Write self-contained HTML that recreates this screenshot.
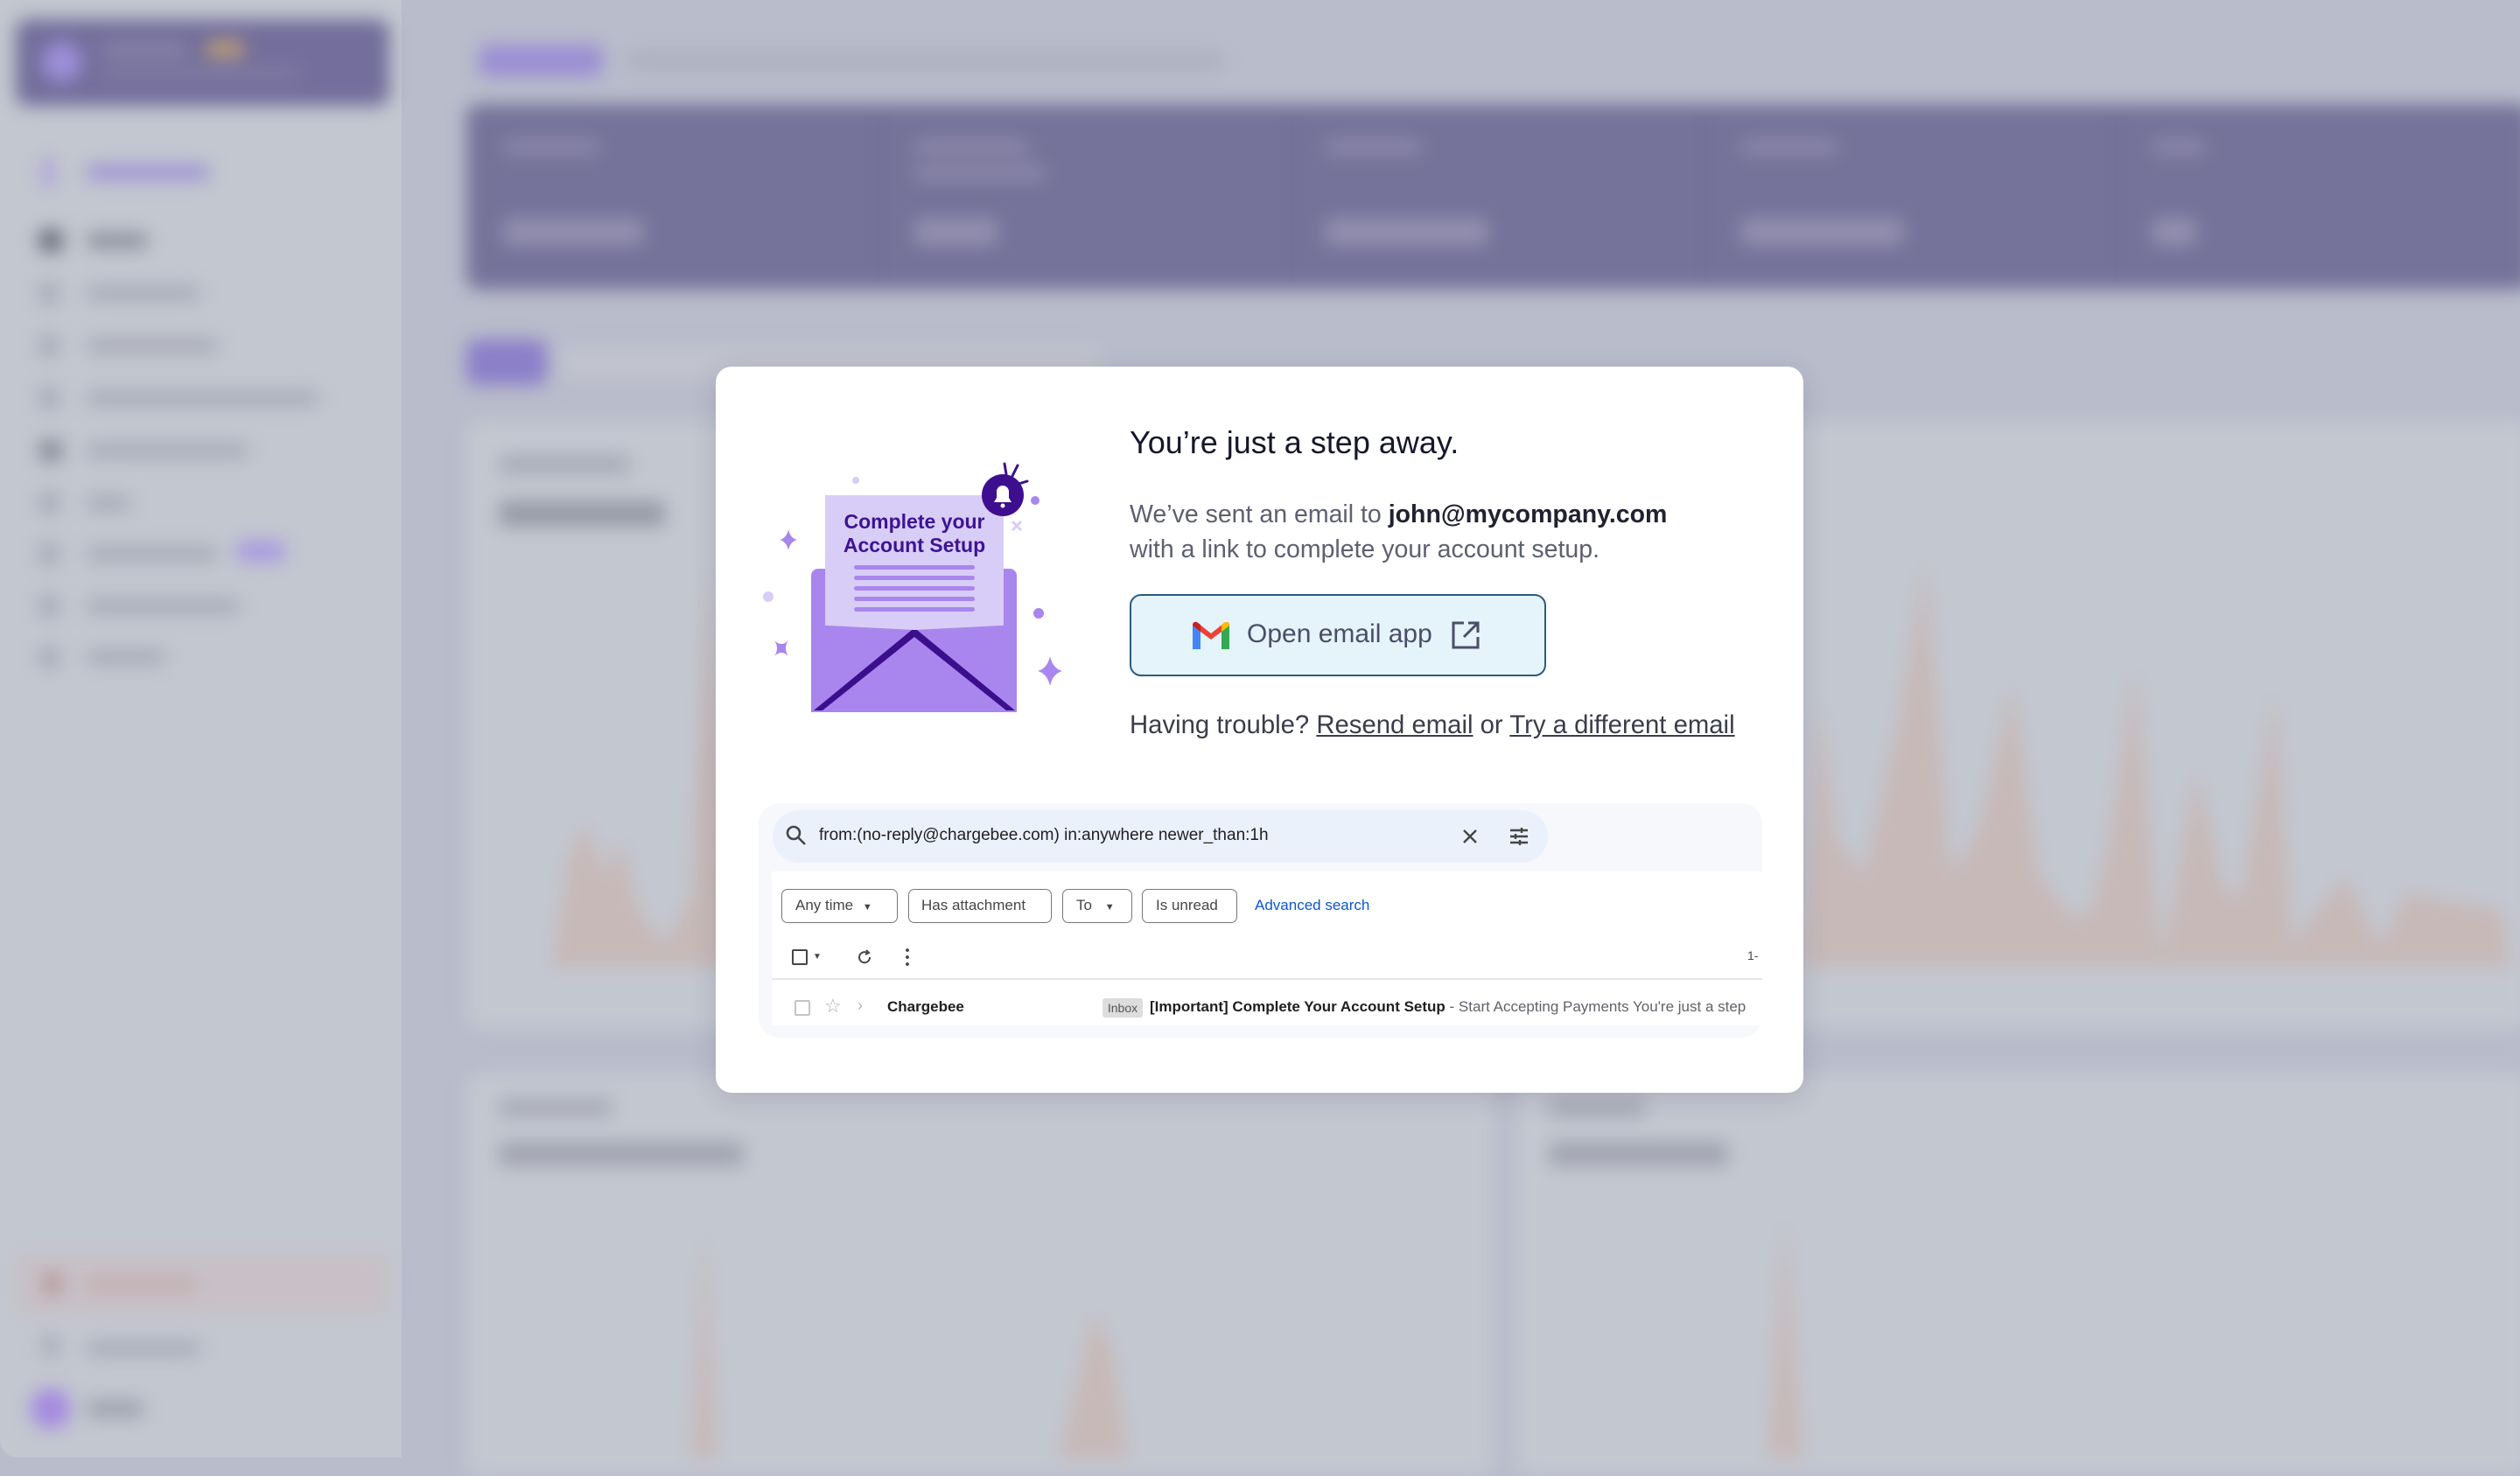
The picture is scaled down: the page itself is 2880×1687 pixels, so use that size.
<!DOCTYPE html>
<html><head><meta charset="utf-8"><style>
*{margin:0;padding:0;box-sizing:border-box}
body{width:2880px;height:1666px;overflow:hidden;background:#b9bccb;font-family:"Liberation Sans",sans-serif;position:relative}
.abs{position:absolute}
.bl{filter:blur(10px)}
.g{position:absolute;background:#a9acb8;border-radius:8px}
</style></head><body>
<div class="abs" style="left:0;top:0;width:459px;height:1666px;background:#c3c7d0;border-radius:0 0 0 20px"></div>
<div class="bl">
<div class="abs" style="left:18px;top:22px;width:427px;height:99px;background:#736e9b;border-radius:14px"></div>
<div class="abs" style="left:48px;top:48px;width:46px;height:46px;background:#9d8fd8;border-radius:50%"></div>
<div class="abs" style="left:115px;top:50px;width:100px;height:14px;background:#8b87ab;border-radius:6px"></div>
<div class="abs" style="left:235px;top:46px;width:44px;height:20px;background:#b99c79;border-radius:6px"></div>
<div class="abs" style="left:115px;top:78px;width:230px;height:12px;background:#847fa6;border-radius:6px"></div>
<div class="abs" style="left:50px;top:180px;width:10px;height:34px;background:#a791e0;border-radius:4px"></div>
<div class="abs" style="left:99px;top:188px;width:140px;height:18px;background:#9f94d4;border-radius:6px"></div>
<div class="g" style="left:44px;top:262px;width:28px;height:26px;background:#6d707d"></div><div class="g" style="left:99px;top:266px;width:70px;height:18px;background:#8d909c"></div>
<div class="g" style="left:44px;top:322px;width:24px;height:26px"></div><div class="g" style="left:99px;top:326px;width:130px;height:18px"></div>
<div class="g" style="left:44px;top:382px;width:24px;height:26px"></div><div class="g" style="left:99px;top:386px;width:150px;height:18px"></div>
<div class="g" style="left:44px;top:442px;width:24px;height:26px"></div><div class="g" style="left:99px;top:446px;width:265px;height:18px"></div>
<div class="g" style="left:44px;top:502px;width:28px;height:26px;background:#8d909c"></div><div class="g" style="left:99px;top:506px;width:185px;height:18px"></div>
<div class="g" style="left:44px;top:562px;width:24px;height:26px"></div><div class="g" style="left:99px;top:566px;width:50px;height:18px"></div>
<div class="g" style="left:44px;top:620px;width:24px;height:26px"></div><div class="g" style="left:99px;top:624px;width:150px;height:18px"></div><div class="abs" style="left:270px;top:618px;width:56px;height:24px;background:#a89ae0;border-radius:8px"></div>
<div class="g" style="left:44px;top:680px;width:24px;height:26px"></div><div class="g" style="left:99px;top:684px;width:175px;height:18px"></div>
<div class="g" style="left:44px;top:738px;width:24px;height:26px"></div><div class="g" style="left:99px;top:742px;width:90px;height:18px"></div>
<div class="abs" style="left:18px;top:1432px;width:427px;height:70px;background:#c7c0c6;border-radius:12px"></div>
<div class="abs" style="left:48px;top:1452px;width:24px;height:30px;background:#b79b9d;border-radius:50%"></div><div class="abs" style="left:99px;top:1460px;width:125px;height:16px;background:#c4aeae;border-radius:6px"></div>
<div class="g" style="left:48px;top:1525px;width:20px;height:26px"></div><div class="g" style="left:99px;top:1532px;width:130px;height:18px"></div>
<div class="abs" style="left:35px;top:1587px;width:46px;height:46px;background:#a48ae0;border-radius:50%"></div><div class="g" style="left:99px;top:1600px;width:65px;height:20px;background:#9fa2ae"></div>

<div class="abs" style="left:547px;top:51px;width:142px;height:37px;background:#9b8fd3;border-radius:10px"></div>
<div class="abs" style="left:718px;top:62px;width:680px;height:16px;background:#aaadbb;border-radius:6px"></div>
<div class="abs" style="left:533px;top:119px;width:2360px;height:212px;background:#76739a;border-radius:14px"></div>
<div class="abs" style="left:575px;top:160px;width:110px;height:16px;background:#8d8aab;border-radius:5px"></div>
<div class="abs" style="left:575px;top:250px;width:160px;height:30px;background:#9390b0;border-radius:6px"></div>
<div class="abs" style="left:1045px;top:160px;width:130px;height:16px;background:#8d8aab;border-radius:5px"></div><div class="abs" style="left:1045px;top:190px;width:150px;height:16px;background:#8d8aab;border-radius:5px"></div>
<div class="abs" style="left:1045px;top:250px;width:95px;height:30px;background:#9390b0;border-radius:6px"></div>
<div class="abs" style="left:1515px;top:160px;width:110px;height:16px;background:#8d8aab;border-radius:5px"></div><div class="abs" style="left:1515px;top:250px;width:185px;height:30px;background:#9390b0;border-radius:6px"></div>
<div class="abs" style="left:1990px;top:160px;width:110px;height:16px;background:#8d8aab;border-radius:5px"></div><div class="abs" style="left:1990px;top:250px;width:185px;height:30px;background:#9390b0;border-radius:6px"></div>
<div class="abs" style="left:2460px;top:160px;width:60px;height:16px;background:#8d8aab;border-radius:5px"></div><div class="abs" style="left:2460px;top:250px;width:50px;height:30px;background:#9390b0;border-radius:6px"></div>
<div class="abs" style="left:1001px;top:130px;width:4px;height:190px;background:#6c6990"></div>
<div class="abs" style="left:1475px;top:130px;width:4px;height:190px;background:#6c6990"></div>
<div class="abs" style="left:1947px;top:130px;width:4px;height:190px;background:#6c6990"></div>
<div class="abs" style="left:2416px;top:130px;width:4px;height:190px;background:#6c6990"></div>
<div class="abs" style="left:533px;top:388px;width:92px;height:52px;background:#8b7fc9;border-radius:10px"></div>
<div class="abs" style="left:640px;top:395px;width:620px;height:40px;background:#c0c3cd;border-radius:8px"></div>
<div class="abs" style="left:533px;top:481px;width:2360px;height:695px;background:#c3c7d0;border-radius:16px"></div>
<div class="abs" style="left:570px;top:520px;width:150px;height:22px;background:#a9acb8;border-radius:6px"></div>
<div class="abs" style="left:570px;top:572px;width:190px;height:30px;background:#999ca8;border-radius:6px"></div>
<div class="abs" style="left:533px;top:1227px;width:1175px;height:460px;background:#c3c7d0;border-radius:16px"></div>
<div class="abs" style="left:1732px;top:1227px;width:1160px;height:460px;background:#c3c7d0;border-radius:16px"></div>
<div class="abs" style="left:570px;top:1255px;width:130px;height:22px;background:#a9acb8;border-radius:6px"></div>
<div class="abs" style="left:570px;top:1305px;width:280px;height:28px;background:#a2a5b1;border-radius:6px"></div>
<div class="abs" style="left:1770px;top:1255px;width:110px;height:22px;background:#a9acb8;border-radius:6px"></div>
<div class="abs" style="left:1770px;top:1305px;width:205px;height:28px;background:#a2a5b1;border-radius:6px"></div>
<svg class="abs" style="left:0;top:0" width="2880" height="1666">
<g fill="#c7b9b8">
<polygon points="630,1105 650,980 670,940 690,1000 710,960 730,1040 760,1080 790,1020 810,640 830,980 850,1105"/>
<polygon points="2060,1105 2080,800 2100,960 2130,1000 2170,820 2200,640 2230,1000 2260,950 2300,780 2330,1000 2370,1050 2390,1040 2410,960 2440,760 2470,1100 2510,880 2540,1010 2560,1030 2600,790 2620,1080 2640,1050 2680,1000 2720,1080 2750,1020 2800,1030 2860,1040 2870,1105"/>
<polygon points="790,1666 805,1400 820,1666"/>
<polygon points="1210,1666 1250,1500 1270,1540 1290,1666"/>
<polygon points="2020,1666 2040,1390 2060,1666"/>
</g>
</svg>
</div>

<div class="abs" style="left:818px;top:419px;width:1243px;height:830px;background:#fff;border-radius:18px;box-shadow:0 6px 30px rgba(40,40,70,.15)"></div>

<svg class="abs" style="left:860px;top:520px" width="360" height="320" viewBox="860 520 360 320">
<rect x="927" y="650" width="235" height="164" rx="8" fill="#a986ee"/>
<polygon points="943,566 1147,566 1147,735 1045,795 943,735" fill="#d8cdf6"/>
<g fill="#a986ee"><rect x="976" y="646" width="138" height="5" rx="2.5"/><rect x="976" y="658" width="138" height="5" rx="2.5"/><rect x="976" y="670" width="138" height="5" rx="2.5"/><rect x="976" y="682" width="138" height="5" rx="2.5"/><rect x="976" y="694" width="138" height="5" rx="2.5"/></g>
<polygon points="927,714 1045,720 1162,714 1162,814 927,814" fill="#a986ee"/>
<polygon points="930,812 1042,720 1048,720 1160,812 1150,812 1045,728 940,812" fill="#3b0f8c"/>
<text x="1045" y="604" text-anchor="middle" font-family="Liberation Sans, sans-serif" font-size="23" font-weight="700" fill="#3d1394">Complete your</text>
<text x="1045" y="631" text-anchor="middle" font-family="Liberation Sans, sans-serif" font-size="23" font-weight="700" fill="#3d1394">Account Setup</text>
<circle cx="1146" cy="566" r="24" fill="#3d0f8f"/>
<path d="M1136,574 L1156,574 L1153,569 L1153,562 A7,7 0 0 0 1139,562 L1139,569 Z" fill="#fff"/>
<circle cx="1146" cy="578" r="2.5" fill="#fff"/>
<path d="M1148,530 L1150,542 M1163,532 L1157,544 M1174,550 L1164,553" stroke="#3d0f8f" stroke-width="3" stroke-linecap="round"/>
<circle cx="1183" cy="572" r="5" fill="#a986ee"/><circle cx="1187" cy="701" r="6" fill="#a986ee"/><circle cx="878" cy="682" r="6" fill="#d8cdf6"/><circle cx="978" cy="549" r="4" fill="#d8cdf6"/>
<path d="M901,605 Q903,615 911,617 Q903,619 901,629 Q899,619 891,617 Q899,615 901,605Z" fill="#a986ee"/>
<path d="M1200,750 Q1203,764 1214,767 Q1203,770 1200,784 Q1197,770 1186,767 Q1197,764 1200,750Z" fill="#a986ee"/>
<path d="M885,732 Q893,740 901,732 Q895,741 901,750 Q893,742 885,750 Q891,741 885,732Z" fill="#a986ee"/>
<path d="M1157,596 L1167,606 M1167,596 L1157,606" stroke="#d8cdf6" stroke-width="3"/>
</svg>

<div class="abs" style="left:1291px;top:485px;font-size:36px;font-weight:500;color:#15172a;white-space:nowrap">You’re just a step away.</div>
<div class="abs" style="left:1291px;top:568px;font-size:28.5px;line-height:40px;color:#5d6070;white-space:nowrap">We’ve sent an email to <b style="color:#1f2230">john@mycompany.com</b><br>with a link to complete your account setup.</div>

<div class="abs" style="left:1291px;top:679px;width:476px;height:94px;border:2.5px solid #2d5c7e;border-radius:13px;background:#e5f3fa"></div>
<svg class="abs" style="left:1363px;top:710px" width="42" height="32" viewBox="0 0 42 32">
<path d="M0,5 L0,32 L9,32 L9,12 Z" fill="#4285f4"/><path d="M42,5 L42,32 L33,32 L33,12 Z" fill="#34a853"/>
<path d="M0,5 Q0,-1 6,2 L21,14 L36,2 Q42,-1 42,5 L33,12 L21,21 L9,12 Z" fill="#ea4335"/>
<path d="M33,12 L42,5 Q42,0 37,1 L33,4Z" fill="#fbbc04"/><path d="M9,12 L0,5 Q0,0 5,1 L9,4Z" fill="#c5221f"/>
</svg>
<div class="abs" style="left:1425px;top:708px;font-size:30px;color:#4a4e68;white-space:nowrap">Open email app</div>
<svg class="abs" style="left:1658px;top:709px" width="34" height="34" viewBox="0 0 34 34" fill="none" stroke="#4a4e68" stroke-width="3"><path d="M15,3 H3 V31 H31 V19"/><path d="M20,3 H31 V14 M31,3 L15,19"/></svg>

<div class="abs" style="left:1291px;top:812px;font-size:29.3px;color:#3a3d4a;white-space:nowrap">Having trouble? <u>Resend email</u> or <u>Try a different email</u></div>

<div class="abs" style="left:867px;top:918px;width:1147px;height:268px;background:#f6f8fc;border-radius:24px;overflow:hidden">
 <div class="abs" style="left:16px;top:8px;width:886px;height:60px;background:#eaf1fb;border-radius:30px"></div>
 <svg class="abs" style="left:30px;top:24px" width="26" height="26" viewBox="0 0 26 26" fill="none" stroke="#444746" stroke-width="2.6"><circle cx="10" cy="10" r="7"/><path d="M15,15 L23,23"/></svg>
 <div class="abs" style="left:69px;top:26px;font-size:19px;color:#1f1f1f;white-space:nowrap">from:(no-reply@chargebee.com) in:anywhere newer_than:1h</div>
 <svg class="abs" style="left:803px;top:28px" width="20" height="20" viewBox="0 0 20 20" stroke="#444746" stroke-width="2.4"><path d="M3,3 L17,17 M17,3 L3,17"/></svg>
 <svg class="abs" style="left:857px;top:26px" width="24" height="24" viewBox="0 0 24 24" stroke="#444746" stroke-width="2.4"><path d="M2,5 H22 M2,12 H22 M2,19 H22"/><path d="M15,2 V8 M8,9 V15 M13,16 V22"/></svg>
 <div class="abs" style="left:15px;top:78px;width:1140px;height:176px;background:#fff"></div>
 <div class="abs" style="left:26px;top:98px;width:133px;height:39px;border:1.5px solid #747775;border-radius:7px;font-size:17px;color:#444746;line-height:36px;padding-left:15px">Any time <span style="font-size:11px;margin-left:6px">▼</span></div>
 <div class="abs" style="left:171px;top:98px;width:164px;height:39px;border:1.5px solid #747775;border-radius:7px;font-size:17px;color:#444746;line-height:36px;padding-left:14px">Has attachment</div>
 <div class="abs" style="left:347px;top:98px;width:80px;height:39px;border:1.5px solid #747775;border-radius:7px;font-size:17px;color:#444746;line-height:36px;padding-left:15px">To <span style="font-size:11px;margin-left:10px">▼</span></div>
 <div class="abs" style="left:438px;top:98px;width:109px;height:39px;border:1.5px solid #747775;border-radius:7px;font-size:17px;color:#444746;line-height:36px;padding-left:15px">Is unread</div>
 <div class="abs" style="left:567px;top:107px;font-size:17px;color:#0b57d0">Advanced search</div>
 <div class="abs" style="left:38px;top:167px;width:18px;height:18px;border:2px solid #444746;border-radius:2px"></div>
 <div class="abs" style="left:62px;top:170px;font-size:10px;color:#444746">▼</div>
 <svg class="abs" style="left:112px;top:167px" width="18" height="18" viewBox="0 0 18 18" fill="none" stroke="#444746" stroke-width="2"><path d="M15,9 A6,6 0 1 1 12,4"/><path d="M11,1 L14,4 L10,6"/></svg>
 <div class="abs" style="left:168px;top:164px;width:4px;height:22px;background:radial-gradient(circle,#444746 1.8px,transparent 2px) 0 0/4px 8px"></div>
 <div class="abs" style="left:1130px;top:166px;font-size:14px;color:#444746">1-</div>
 <div class="abs" style="left:15px;top:200px;width:1140px;height:1.5px;background:#e6e6e6"></div>
 <div class="abs" style="left:41px;top:225px;width:18px;height:18px;border:2px solid #c4c4c4;border-radius:2px"></div>
 <div class="abs" style="left:75px;top:219px;font-size:22px;color:#b0b0b0">☆</div>
 <div class="abs" style="left:113px;top:221px;font-size:18px;color:#b0b0b0">›</div>
 <div class="abs" style="left:147px;top:223px;font-size:17px;font-weight:700;color:#1f1f1f">Chargebee</div>
 <div class="abs" style="left:393px;top:223px;width:46px;height:22px;background:#dddddd;border-radius:3px;font-size:14px;color:#555;line-height:22px;text-align:center">Inbox</div>
 <div class="abs" style="left:447px;top:223px;font-size:17px;color:#1f1f1f;white-space:nowrap"><b>[Important] Complete Your Account Setup</b> <span style="color:#5f6368">- Start Accepting Payments You're just a step</span></div>
</div>
</body></html>
